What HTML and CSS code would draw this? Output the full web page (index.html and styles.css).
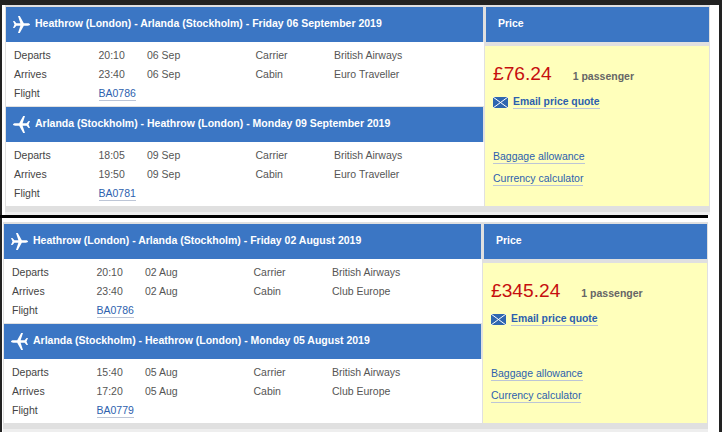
FILE: index.html
```html
<!DOCTYPE html>
<html lang="en">
<head>
<meta charset="utf-8">
<title>Flight quotes</title>
<link rel="stylesheet" href="styles.css">
</head>
<body>
<svg class="defs" width="0" height="0" aria-hidden="true">
  <symbol id="plane" viewBox="0 0 17 17">
    <path d="M0 5 L1.4 5 L3.4 7.3 L7.4 7.3 L5 0 L6.8 0 L10.8 7.3 L14.6 7.3 C16.2 7.3 17 8 17 8.5 C17 9 16.2 9.7 14.6 9.7 L10.8 9.7 L6.8 17 L5 17 L7.4 9.7 L3.4 9.7 L1.4 12 L0 12 L1.5 8.5 Z" fill="#fff"/>
  </symbol>
  <symbol id="mail" viewBox="0 0 15 11">
    <rect width="15" height="11" fill="#2f66b0"/>
    <path d="M0 0 L15 11 M15 0 L0 11" fill="none" stroke="#fff" stroke-width="1"/>
  </symbol>
</svg>
<main class="shot">
  <section class="card card-one">
    <div class="legs">
      <h2 class="leg-head"><svg class="plane"><use href="#plane"/></svg>Heathrow (London) - Arlanda (Stockholm) - Friday 06 September 2019</h2>
      <div class="leg-body">
        <span class="lbl">Departs</span><span>20:10</span><span>06 Sep</span><span class="lbl2">Carrier</span><span>British Airways</span>
        <span class="lbl">Arrives</span><span>23:40</span><span>06 Sep</span><span class="lbl2">Cabin</span><span>Euro Traveller</span>
        <span class="lbl">Flight</span><span class="wide"><a href="#">BA0786</a></span>
      </div>
      <h2 class="leg-head leg-head-return"><svg class="plane plane-back"><use href="#plane"/></svg>Arlanda (Stockholm) - Heathrow (London) - Monday 09 September 2019</h2>
      <div class="leg-body">
        <span class="lbl">Departs</span><span>18:05</span><span>09 Sep</span><span class="lbl2">Carrier</span><span>British Airways</span>
        <span class="lbl">Arrives</span><span>19:50</span><span>09 Sep</span><span class="lbl2">Cabin</span><span>Euro Traveller</span>
        <span class="lbl">Flight</span><span class="wide"><a href="#">BA0781</a></span>
      </div>
    </div>
    <aside class="price">
      <h2 class="price-head">Price</h2>
      <div class="price-body">
        <div class="amount-row"><span class="amount">£76.24</span><span class="pax">1 passenger</span></div>
        <div class="email-row"><svg class="mail"><use href="#mail"/></svg><a class="email" href="#">Email price quote</a></div>
        <div class="extra"><a href="#">Baggage allowance</a></div>
        <div class="extra extra-next"><a href="#">Currency calculator</a></div>
      </div>
    </aside>
  </section>
  <div class="bar"></div>
  <section class="card card-two">
    <div class="legs">
      <h2 class="leg-head"><svg class="plane"><use href="#plane"/></svg>Heathrow (London) - Arlanda (Stockholm) - Friday 02 August 2019</h2>
      <div class="leg-body">
        <span class="lbl">Departs</span><span>20:10</span><span>02 Aug</span><span class="lbl2">Carrier</span><span>British Airways</span>
        <span class="lbl">Arrives</span><span>23:40</span><span>02 Aug</span><span class="lbl2">Cabin</span><span>Club Europe</span>
        <span class="lbl">Flight</span><span class="wide"><a href="#">BA0786</a></span>
      </div>
      <h2 class="leg-head leg-head-return"><svg class="plane plane-back"><use href="#plane"/></svg>Arlanda (Stockholm) - Heathrow (London) - Monday 05 August 2019</h2>
      <div class="leg-body">
        <span class="lbl">Departs</span><span>15:40</span><span>05 Aug</span><span class="lbl2">Carrier</span><span>British Airways</span>
        <span class="lbl">Arrives</span><span>17:20</span><span>05 Aug</span><span class="lbl2">Cabin</span><span>Club Europe</span>
        <span class="lbl">Flight</span><span class="wide"><a href="#">BA0779</a></span>
      </div>
    </div>
    <aside class="price">
      <h2 class="price-head">Price</h2>
      <div class="price-body">
        <div class="amount-row"><span class="amount">£345.24</span><span class="pax">1 passenger</span></div>
        <div class="email-row"><svg class="mail"><use href="#mail"/></svg><a class="email" href="#">Email price quote</a></div>
        <div class="extra"><a href="#">Baggage allowance</a></div>
        <div class="extra extra-next"><a href="#">Currency calculator</a></div>
      </div>
    </aside>
  </section>
</main>
</body>
</html>
```
FILE: styles.css
```css
html, body {
  margin: 0;
  height: 432px;
  overflow: hidden;
  background: #222;
}
.defs { display: block; height: 0; }
.shot {
  box-sizing: border-box;
  height: 427px;
  margin: 5px 3px 0 2px;
  background: #fff;
  font-family: "Liberation Sans", Arial, sans-serif;
  font-size: 10.5px;
  color: #555;
}
.card {
  display: flex;
  width: 705px;
  height: 210px;
  box-sizing: border-box;
  background: #e0e0e0;
  padding: 2px 1px 5px;
  border-bottom: 3px solid #eee;
}
.card-one { margin-left: 3px; }
.card-two { margin-left: 1px; }
.bar {
  height: 3px;
  margin: 0 11px 4px -2px;
  background: #000;
}
.legs { width: 478px; flex: none; }
.leg-head {
  display: flex;
  align-items: center;
  width: 477px;
  height: 35px;
  margin: 0;
  box-sizing: border-box;
  padding: 0 0 3px 7px;
  background: #3b76c4;
  color: #fff;
  font-size: 10.5px;
  font-weight: 700;
}
.plane { width: 17px; height: 17px; margin: 3px 5px 0 0; flex: none; }
.plane-back { transform: scaleX(-1); }
.leg-head-return { margin-top: 1px; }
.leg-body {
  display: grid;
  grid-template-columns: 84.5px 48.5px 108.5px 78.5px 1fr;
  grid-auto-rows: 19px;
  align-items: center;
  height: 64px;
  box-sizing: border-box;
  padding: 3px 0 0 8px;
  background: #fff;
}
.lbl { color: #444; }
.wide { grid-column: 2 / 6; }
a {
  color: #2d5fae;
  text-decoration: none;
  border-bottom: 1px solid #bcc5d6;
  padding-bottom: 1px;
}
.price { width: 225px; flex: none; }
.price-head {
  display: flex;
  align-items: center;
  height: 35px;
  box-sizing: border-box;
  margin: 0 0 4px 2px;
  padding: 0 0 3px 12px;
  background: #3b76c4;
  color: #fff;
  font-size: 10.5px;
  font-weight: 700;
}
.price-body {
  height: 160px;
  box-sizing: border-box;
  margin-left: 1px;
  padding: 15px 0 0 8px;
  background: #ffffbb;
}
.amount-row { display: flex; align-items: baseline; gap: 21px; }
.amount { font-size: 19.2px; color: #c60f0f; line-height: 26px; }
.pax { font-weight: 700; color: #666; font-size: 10.5px; }
.email-row { display: flex; align-items: center; gap: 5px; margin-top: 7px; height: 16px; }
.mail { width: 15px; height: 11px; flex: none; }
.email { font-weight: 700; font-size: 10.4px; }
.extra { margin-top: 39px; line-height: 14px; }
.extra-next { margin-top: 8px; }
```
